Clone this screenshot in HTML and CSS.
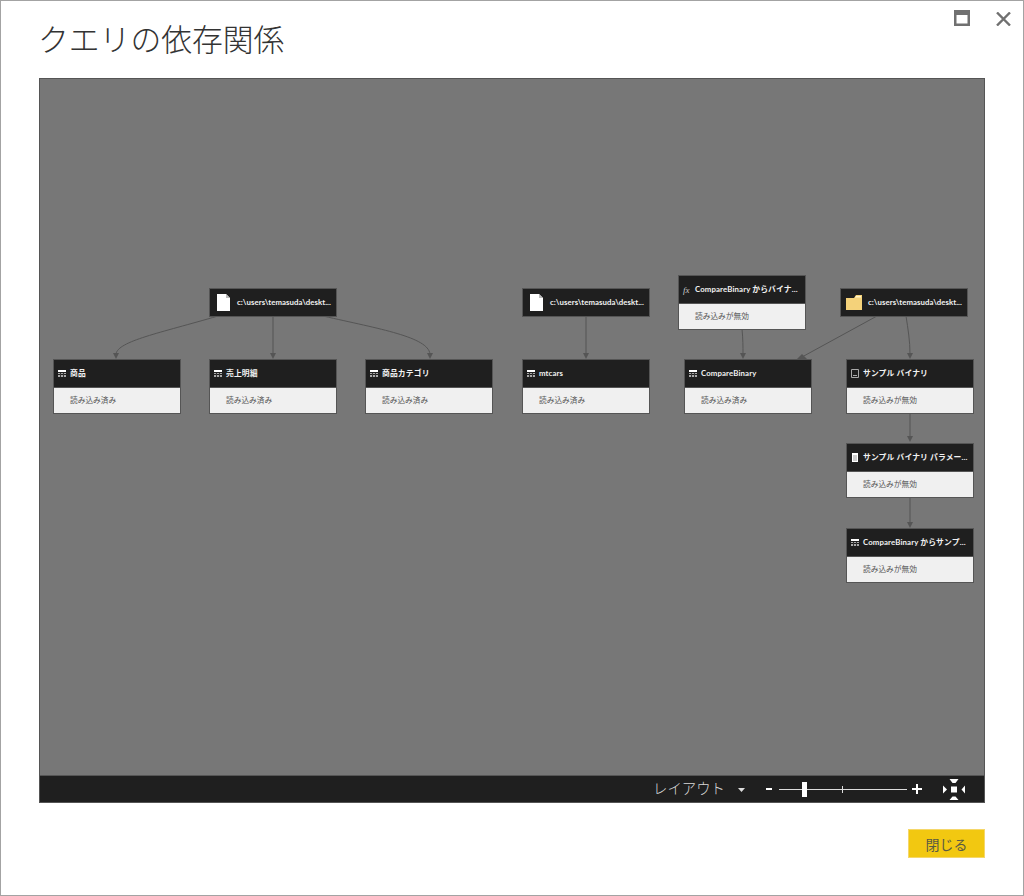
FILE: index.html
```html
<!DOCTYPE html>
<html lang="ja">
<head>
<meta charset="utf-8">
<title>クエリの依存関係</title>
<link rel="stylesheet" href="styles.css">
</head>
<body>
<div class="dialog">
  <header class="header">
    <h1 class="title">クエリの依存関係</h1>
    <div class="winctl">
      <svg class="ic-max" width="16" height="16" viewBox="0 0 16 16"><path fill="#707070" fill-rule="evenodd" d="M0 0h16v16H0zM2.500 5v8.500h11V5z"/></svg>
      <svg class="ic-close" width="15" height="14" viewBox="0 0 15 14"><path stroke="#707070" stroke-width="2.400" d="M1 .5l13 13M14 .5L1 13.500"/></svg>
    </div>
  </header>
  <main class="graph">
    <div class="canvas">
      <svg class="edges" width="944" height="697" viewBox="0 0 944 697">
        <g fill="none" stroke="#555" stroke-width="1">
          <path d="M178 237C120 254 78 262 76 275"/>
          <path d="M233 237V275"/>
          <path d="M283 237C340 250 388 258 390 275"/>
          <path d="M546 237V275"/>
          <path d="M702 250C703 260 703 268 703 275"/>
          <path d="M837 237L762 278"/>
          <path d="M866 237C868 250 870 262 870 275"/>
          <path d="M870 335V358"/>
          <path d="M870 419V444"/>
        </g>
        <g fill="#555">
          <path d="M73 274h6l-3 6z"/>
          <path d="M230 274h6l-3 6z"/>
          <path d="M387 274h6l-3 6z"/>
          <path d="M543 274h6l-3 6z"/>
          <path d="M700 274h6l-3 6z"/>
          <path d="M867 274h6l-3 6z"/>
          <path d="M757 280l5-5 5 5z"/>
          <path d="M867 357h6l-3 6z"/>
          <path d="M867 443h6l-3 6z"/>
        </g>
      </svg>

      <div class="node pos-src1 source">
        <div class="node-head">
          <svg class="ic-file" width="13" height="17" viewBox="0 0 13 17"><path fill="#fff" d="M0 0h9l4 4v13H0z"/><path fill="#bbb" d="M9 0v4h4z"/></svg>
          <span class="name">c:\users\temasuda\deskt...</span>
        </div>
      </div>
      <div class="node pos-src2 source">
        <div class="node-head">
          <svg class="ic-file" width="13" height="17" viewBox="0 0 13 17"><path fill="#fff" d="M0 0h9l4 4v13H0z"/><path fill="#bbb" d="M9 0v4h4z"/></svg>
          <span class="name">c:\users\temasuda\deskt...</span>
        </div>
      </div>
      <div class="node pos-src3 source">
        <div class="node-head folder-head">
          <svg class="ic-folder" width="16" height="15" viewBox="0 0 16 15"><path fill="#f4d27a" d="M0 3h8l2-3h6v15H0z"/><path fill="#fff3c8" d="M10 1h5v1.500h-6z"/></svg>
          <span class="name">c:\users\temasuda\deskt...</span>
        </div>
      </div>

      <div class="node pos-a">
        <div class="node-head">
          <svg class="ic-table" width="8" height="7" viewBox="0 0 8 7"><path fill="#fff" d="M0 0h8v2H0z"/><path fill="#aaa" d="M0 3h8v1H0zM0 5h8v2H0z"/><path fill="#333" d="M2 3h1v4H2zM5 3h1v4H5z"/></svg>
          <span class="name">商品</span>
        </div>
        <div class="node-body">読み込み済み</div>
      </div>
      <div class="node pos-b">
        <div class="node-head">
          <svg class="ic-table" width="8" height="7" viewBox="0 0 8 7"><path fill="#fff" d="M0 0h8v2H0z"/><path fill="#aaa" d="M0 3h8v1H0zM0 5h8v2H0z"/><path fill="#333" d="M2 3h1v4H2zM5 3h1v4H5z"/></svg>
          <span class="name">売上明細</span>
        </div>
        <div class="node-body">読み込み済み</div>
      </div>
      <div class="node pos-c">
        <div class="node-head">
          <svg class="ic-table" width="8" height="7" viewBox="0 0 8 7"><path fill="#fff" d="M0 0h8v2H0z"/><path fill="#aaa" d="M0 3h8v1H0zM0 5h8v2H0z"/><path fill="#333" d="M2 3h1v4H2zM5 3h1v4H5z"/></svg>
          <span class="name">商品カテゴリ</span>
        </div>
        <div class="node-body">読み込み済み</div>
      </div>
      <div class="node pos-d">
        <div class="node-head">
          <svg class="ic-table" width="8" height="7" viewBox="0 0 8 7"><path fill="#fff" d="M0 0h8v2H0z"/><path fill="#aaa" d="M0 3h8v1H0zM0 5h8v2H0z"/><path fill="#333" d="M2 3h1v4H2zM5 3h1v4H5z"/></svg>
          <span class="name">mtcars</span>
        </div>
        <div class="node-body">読み込み済み</div>
      </div>
      <div class="node pos-e">
        <div class="node-head">
          <span class="ic-fx">fx</span>
          <span class="name">CompareBinary からバイナ...</span>
        </div>
        <div class="node-body">読み込みが無効</div>
      </div>
      <div class="node pos-f">
        <div class="node-head">
          <svg class="ic-table" width="8" height="7" viewBox="0 0 8 7"><path fill="#fff" d="M0 0h8v2H0z"/><path fill="#aaa" d="M0 3h8v1H0zM0 5h8v2H0z"/><path fill="#333" d="M2 3h1v4H2zM5 3h1v4H5z"/></svg>
          <span class="name">CompareBinary</span>
        </div>
        <div class="node-body">読み込み済み</div>
      </div>
      <div class="node pos-g">
        <div class="node-head">
          <svg class="ic-bin" width="8" height="9" viewBox="0 0 8 9"><path fill="none" stroke="#aaa" d="M.5.500h7v8h-7z"/><path stroke="#aaa" d="M2 6.500h4"/></svg>
          <span class="name">サンプル バイナリ</span>
        </div>
        <div class="node-body">読み込みが無効</div>
      </div>
      <div class="node pos-h">
        <div class="node-head">
          <svg class="ic-param" width="8" height="9" viewBox="0 0 8 9"><path fill="#fff" d="M1 0h6v9H1z"/><path stroke="#999" d="M2 3h4M2 5h4M2 7h4"/></svg>
          <span class="name">サンプル バイナリ パラメー...</span>
        </div>
        <div class="node-body">読み込みが無効</div>
      </div>
      <div class="node pos-i">
        <div class="node-head">
          <svg class="ic-table" width="8" height="7" viewBox="0 0 8 7"><path fill="#fff" d="M0 0h8v2H0z"/><path fill="#aaa" d="M0 3h8v1H0zM0 5h8v2H0z"/><path fill="#333" d="M2 3h1v4H2zM5 3h1v4H5z"/></svg>
          <span class="name">CompareBinary からサンプ...</span>
        </div>
        <div class="node-body">読み込みが無効</div>
      </div>
    </div>
    <div class="toolbar">
      <span class="layout">レイアウト</span>
      <svg class="caret" width="7" height="4" viewBox="0 0 7 4"><path fill="#ddd" d="M0 0h7L3.500 4z"/></svg>
      <span class="minus"></span>
      <div class="slider"><span class="tick"></span><span class="thumb"></span></div>
      <svg class="plus" width="10" height="10" viewBox="0 0 10 10"><path stroke="#fff" stroke-width="2" d="M0 5h10M5 0v10"/></svg>
      <svg class="fit" width="22" height="21" viewBox="0 0 22 21"><path fill="#fff" d="M8 7.500h6v6H8zM6.500 0h9l-3 4h-3zM6.500 21h9l-3-3.500h-3zM0 6.500l4 4-4 4zM22 6.500L18.500 10.500l3.500 4z"/></svg>
    </div>
  </main>
  <footer class="footer">
    <button class="close" type="button">閉じる</button>
  </footer>
</div>
</body>
</html>
```

FILE: styles.css
```css
* { box-sizing: border-box; }
html, body { margin: 0; padding: 0; }
body {
  width: 1024px;
  height: 896px;
  background: #fff;
  font-family: "Liberation Sans", "Noto Sans CJK JP", sans-serif;
  overflow: hidden;
}
.dialog {
  width: 1024px;
  height: 896px;
  border: 1px solid #a3a3a3;
  display: flex;
  flex-direction: column;
  padding: 0 38px;
}
.header {
  height: 77px;
  flex: none;
  position: relative;
}
.title {
  margin: 15px 0 0 -1px;
  font: 300 30.800px/44px "Noto Sans CJK JP", sans-serif;
  color: #333;
}
.winctl {
  position: absolute;
  top: 9px;
  right: -26px;
  display: flex;
  gap: 26px;
  align-items: flex-start;
}
.ic-close { margin-top: 2px; }
.graph {
  width: 946px;
  height: 725px;
  flex: none;
  border: 1px solid #555;
  display: flex;
  flex-direction: column;
}
.canvas {
  flex: 1;
  position: relative;
  background: #777;
  border-bottom: 1px solid #555;
}
.edges { position: absolute; left: 0; top: 0; }
.node {
  position: absolute;
  width: 128px;
  border: 1px solid #555;
  background: #f0f0f0;
}
.node-head {
  height: 27px;
  background: #1f1f1f;
  display: flex;
  align-items: center;
  padding-left: 4px;
  gap: 4px;
  overflow: hidden;
}
.node-head svg { flex: none; }
.source { height: 29px; background: #1f1f1f; }
.source .node-head { padding-left: 7px; gap: 7px; }
.source .folder-head { padding-left: 5px; gap: 6px; }
.source .name { letter-spacing: 0.050px; }
.name {
  font: 700 7.800px/12px "Lato", "Noto Sans CJK JP", sans-serif;
  letter-spacing: 0.130px;
  color: #f2f2f2;
  white-space: nowrap;
  margin-top: -2px;
}
.node-body {
  height: 26px;
  border-top: 1px solid #555;
  padding-left: 16px;
  font: 400 7.700px/25px "Lato", "Noto Sans CJK JP", sans-serif;
  color: #555;
}
.ic-fx {
  font: italic 9px/12px "Liberation Serif", serif;
  color: #ccc;
  width: 8px;
  flex: none;
}
.pos-src1 { left: 169px; top: 209px; }
.pos-src2 { left: 482px; top: 209px; }
.pos-src3 { left: 800px; top: 209px; }
.pos-a { left: 13px; top: 280px; }
.pos-b { left: 169px; top: 280px; }
.pos-c { left: 325px; top: 280px; }
.pos-d { left: 482px; top: 280px; }
.pos-e { left: 638px; top: 196px; }
.pos-f { left: 644px; top: 280px; }
.pos-g { left: 806px; top: 280px; }
.pos-h { left: 806px; top: 364px; }
.pos-i { left: 806px; top: 449px; }
.toolbar {
  height: 26px;
  flex: none;
  background: #1f1f1f;
  display: flex;
  align-items: center;
  padding-left: 613px;
}
.layout {
  font: 300 14.400px/20px "Noto Sans CJK JP", sans-serif;
  color: #d8d8d8;
  width: 71px;
  white-space: nowrap;
  margin-top: -3px;
}
.caret { margin: 1px 0 0 14px; flex: none; }
.minus { width: 6px; height: 2px; background: #fff; margin-left: 21px; flex: none; }
.slider {
  width: 128px;
  height: 1px;
  background: #ddd;
  margin-left: 7px;
  position: relative;
  flex: none;
}
.thumb {
  position: absolute;
  left: 23px;
  top: -7px;
  width: 5px;
  height: 15px;
  background: #fff;
}
.tick {
  position: absolute;
  left: 63px;
  top: -3px;
  width: 1px;
  height: 7px;
  background: #ddd;
}
.plus { margin-left: 5px; flex: none; }
.fit { margin-left: 21px; flex: none; }
.footer {
  flex: 1;
  display: flex;
  justify-content: flex-end;
  align-items: flex-start;
  padding-top: 26px;
}
.close {
  width: 77px;
  height: 29px;
  border: 1px solid #f5d76a;
  background: #f2c811;
  color: #5a5a44;
  font: 400 14px/20px "Noto Sans CJK JP", sans-serif;
  padding: 0;
}
```
